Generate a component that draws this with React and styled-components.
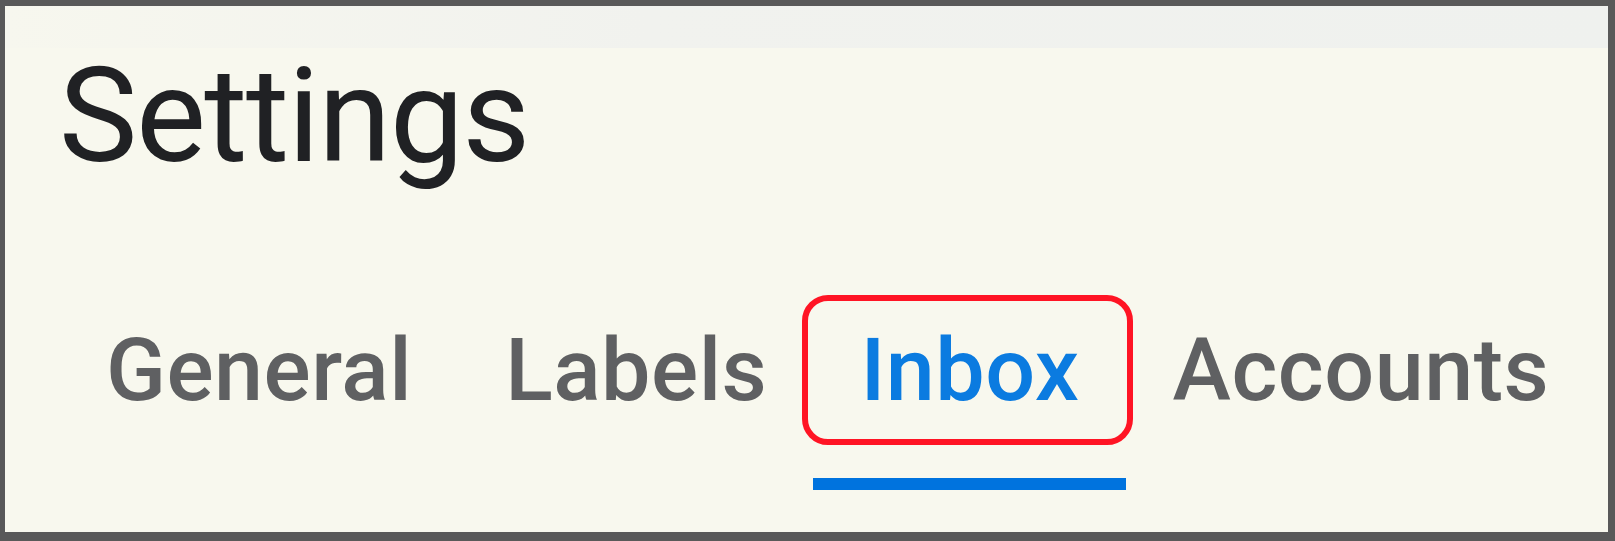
import React from "react";
import styled, { createGlobalStyle } from "styled-components";

const Global = createGlobalStyle`
  html, body { margin: 0; padding: 0; background: #ffffff; }
  #root { width: 1615px; height: 541px; }
`;

const Frame = styled.div`
  box-sizing: border-box;
  width: 1615px;
  height: 541px;
  border-style: solid;
  border-color: #595959;
  border-width: 6px 7px 9px 5px;
  background: #f8f8ee;
  display: flex;
  flex-direction: column;
  font-family: Roboto, "Noto Sans", sans-serif;
  overflow: hidden;
`;

const TopStrip = styled.div`
  height: 42px;
  flex: none;
  background: linear-gradient(90deg, #f7f7ee 0%, #f1f2ee 40%, #eff1ee 100%);
`;

const Title = styled.h1`
  margin: 9px 0 0 0;
  padding-left: 54px;
  font-size: 132px;
  font-weight: 400;
  line-height: 0.9;
  color: #202124;
  letter-spacing: -1.5px;
`;

const TabRow = styled.nav`
  display: flex;
  margin-top: 150px;
  padding-left: 54px;
`;

const Tab = styled.div`
  display: flex;
  flex-direction: column;
  align-items: stretch;
`;

const Label = styled.span`
  position: relative;
  padding: 0 46px 64px 47px;
  font-size: 88px;
  line-height: 1;
  font-weight: 500;
  letter-spacing: 0.5px;
  color: ${(p) => (p.$active ? "#0b7be0" : "#5f6062")};
`;

const Highlight = styled.span`
  position: absolute;
  left: -11px;
  right: -7px;
  top: -31px;
  bottom: 33px;
  border: 6px solid #ff1424;
  border-radius: 26px;
  pointer-events: none;
`;

const Underline = styled.div`
  height: 12px;
  background: ${(p) => (p.$active ? "#0073de" : "transparent")};
`;

const tabs = ["General", "Labels", "Inbox", "Accounts"];

export default function App() {
  return (
    <>
      <Global />
      <Frame>
        <TopStrip />
        <Title>Settings</Title>
        <TabRow>
          {tabs.map((t) => {
            const active = t === "Inbox";
            return (
              <Tab key={t}>
                <Label $active={active}>
                  {t}
                  {active && <Highlight />}
                </Label>
                <Underline $active={active} />
              </Tab>
            );
          })}
        </TabRow>
      </Frame>
    </>
  );
}
